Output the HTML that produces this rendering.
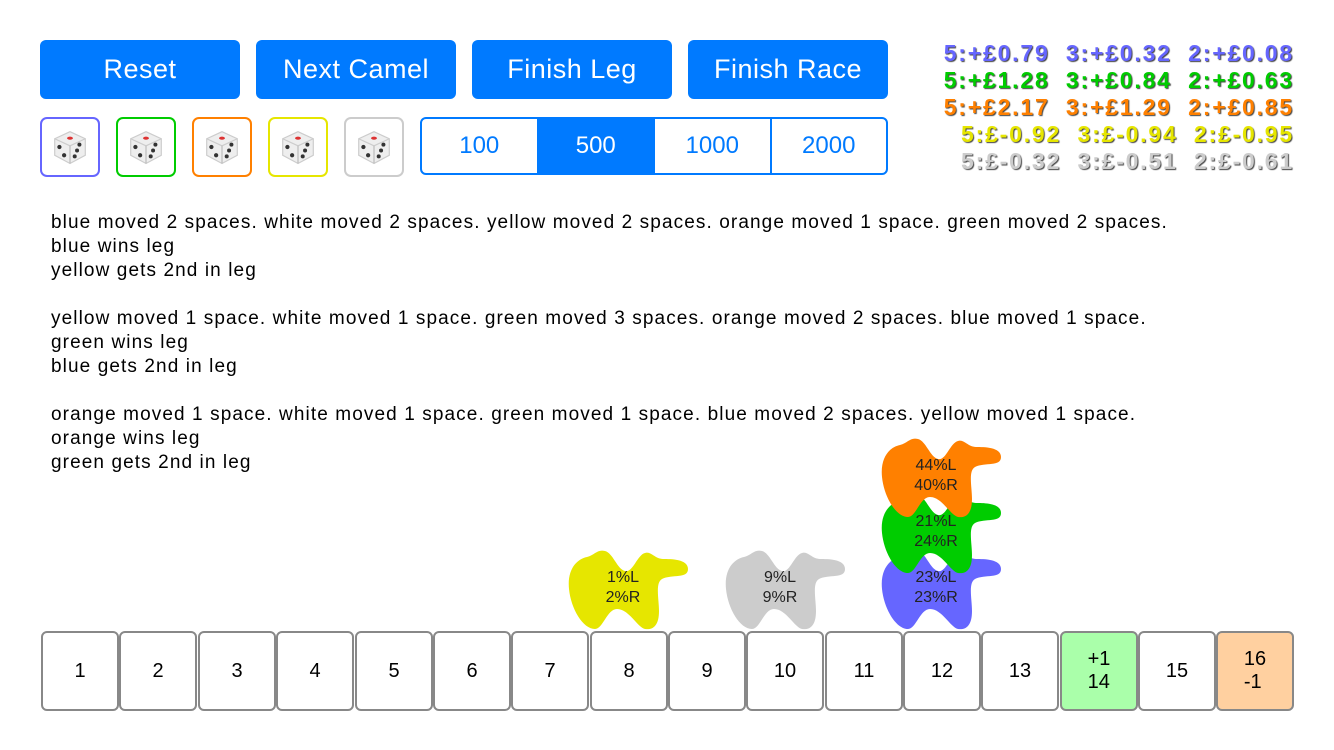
<!DOCTYPE html>
<html><head><meta charset="utf-8"><style>
body{margin:0;width:1334px;height:750px;background:#fff;font-family:"Liberation Sans",sans-serif;position:relative;overflow:hidden}
.btn{position:absolute;top:40px;width:200px;height:59px;background:#007aff;color:#fff;border-radius:6px;font-size:27px;letter-spacing:0.5px;display:flex;align-items:center;justify-content:center}
.die{position:absolute;top:117px;width:56px;height:56px;border:2px solid;border-radius:7px;display:flex;align-items:center;justify-content:center}
.seg{position:absolute;top:117px;left:420px;width:464px;height:54px;border:2px solid #007aff;border-radius:6px;display:flex}
.seg div{flex:1;display:flex;align-items:center;justify-content:center;color:#007aff;font-size:24px;border-left:2px solid #007aff}
.seg div:first-child{border-left:none}
.seg .on{background:#007aff;color:#fff}
.score{position:absolute;right:40px;top:40px;text-align:right;font-weight:bold;font-size:23px;letter-spacing:1.8px;line-height:27px;text-shadow:1px 1px 1px #444;white-space:nowrap}
.log{position:absolute;left:51px;top:211px;font-size:19px;letter-spacing:1.1px;line-height:24px;color:#000;white-space:nowrap}
.tile{position:absolute;top:631px;width:74px;height:76px;border:2px solid #888;border-radius:6px;display:flex;flex-direction:column;align-items:center;justify-content:center;font-size:20px;line-height:23px;background:#fff}
.camel{position:absolute;width:121px;height:81px}
.camel span{position:absolute;left:0;width:112px;top:19px;text-align:center;font-size:16px;line-height:20px;color:#222}
</style></head><body>
<div class="btn" style="left:40px">Reset</div>
<div class="btn" style="left:256px">Next Camel</div>
<div class="btn" style="left:472px">Finish Leg</div>
<div class="btn" style="left:688px">Finish Race</div>

<svg width="0" height="0" style="position:absolute"><defs>
<symbol id="d" viewBox="0 0 34 34"><path d="M4 10 L17 4 L30 10 L30 24 L17 31 L4 24Z" fill="#eee" stroke="#ccc"/><path d="M4 10 L17 16 L30 10" fill="none" stroke="#ccc"/><path d="M17 16 L17 31" stroke="#bbb"/><ellipse cx="17" cy="9.5" rx="2.5" ry="1.3" fill="#d33"/><circle cx="8" cy="17" r="1.8" fill="#333"/><circle cx="12" cy="24" r="1.8" fill="#333"/><circle cx="25" cy="15" r="1.7" fill="#333"/><circle cx="23" cy="20" r="1.7" fill="#333"/><circle cx="21" cy="25" r="1.7" fill="#333"/></symbol>
<symbol id="c" viewBox="0 0 121 81"><path d="M2,40 C0,20 10,10 20,8 C28,6 30,0 38,2 C46,4 50,20 58,22 C66,24 70,6 78,4 C84,2 88,10 96,10 C104,10 121,10 121,20 C121,30 105,25 95,30 C88,34 92,50 92,62 C92,78 85,81 78,80 C70,78 62,60 50,60 C40,60 36,80 28,80 C16,80 4,60 2,40 Z"/></symbol>
</defs></svg>
<div class="die" style="left:40px;border-color:#6666ff"><svg width="40" height="40"><use href="#d"/></svg></div>
<div class="die" style="left:116px;border-color:#00cc00"><svg width="40" height="40"><use href="#d"/></svg></div>
<div class="die" style="left:192px;border-color:#ff8000"><svg width="40" height="40"><use href="#d"/></svg></div>
<div class="die" style="left:268px;border-color:#e6e600"><svg width="40" height="40"><use href="#d"/></svg></div>
<div class="die" style="left:344px;border-color:#cccccc"><svg width="40" height="40"><use href="#d"/></svg></div>
<div class="seg"><div>100</div><div class="on">500</div><div>1000</div><div>2000</div></div>

<div class="score">
<div style="color:#6666ff">5:+£0.79&nbsp; 3:+£0.32&nbsp; 2:+£0.08</div>
<div style="color:#00cc00">5:+£1.28&nbsp; 3:+£0.84&nbsp; 2:+£0.63</div>
<div style="color:#ff8000">5:+£2.17&nbsp; 3:+£1.29&nbsp; 2:+£0.85</div>
<div style="color:#e6e600">5:£-0.92&nbsp; 3:£-0.94&nbsp; 2:£-0.95</div>
<div style="color:#ccc">5:£-0.32&nbsp; 3:£-0.51&nbsp; 2:£-0.61</div>
</div>

<div class="log">blue moved 2 spaces. white moved 2 spaces. yellow moved 2 spaces. orange moved 1 space. green moved 2 spaces.<br>blue wins leg<br>yellow gets 2nd in leg<br><br>yellow moved 1 space. white moved 1 space. green moved 3 spaces. orange moved 2 spaces. blue moved 1 space.<br>green wins leg<br>blue gets 2nd in leg<br><br>orange moved 1 space. white moved 1 space. green moved 1 space. blue moved 2 spaces. yellow moved 1 space.<br>orange wins leg<br>green gets 2nd in leg</div>

<div class="tile" style="left:41px">1</div>
<div class="tile" style="left:119px">2</div>
<div class="tile" style="left:198px">3</div>
<div class="tile" style="left:276px">4</div>
<div class="tile" style="left:355px">5</div>
<div class="tile" style="left:433px">6</div>
<div class="tile" style="left:511px">7</div>
<div class="tile" style="left:590px">8</div>
<div class="tile" style="left:668px">9</div>
<div class="tile" style="left:746px">10</div>
<div class="tile" style="left:825px">11</div>
<div class="tile" style="left:903px">12</div>
<div class="tile" style="left:981px">13</div>
<div class="tile" style="left:1060px;background:#aaffaa">+1<br>14</div>
<div class="tile" style="left:1138px">15</div>
<div class="tile" style="left:1216px;background:#ffd0a0">16<br>-1</div>

<div class="camel" style="left:567px;top:549px"><svg width="121" height="81" fill="#e6e600"><use href="#c"/></svg><span>1%L<br>2%R</span></div>
<div class="camel" style="left:724px;top:549px"><svg width="121" height="81" fill="#cccccc"><use href="#c"/></svg><span>9%L<br>9%R</span></div>
<div class="camel" style="left:880px;top:549px"><svg width="121" height="81" fill="#6666ff"><use href="#c"/></svg><span>23%L<br>23%R</span></div>
<div class="camel" style="left:880px;top:493px"><svg width="121" height="81" fill="#00cc00"><use href="#c"/></svg><span>21%L<br>24%R</span></div>
<div class="camel" style="left:880px;top:437px"><svg width="121" height="81" fill="#ff8000"><use href="#c"/></svg><span>44%L<br>40%R</span></div>
</body></html>
